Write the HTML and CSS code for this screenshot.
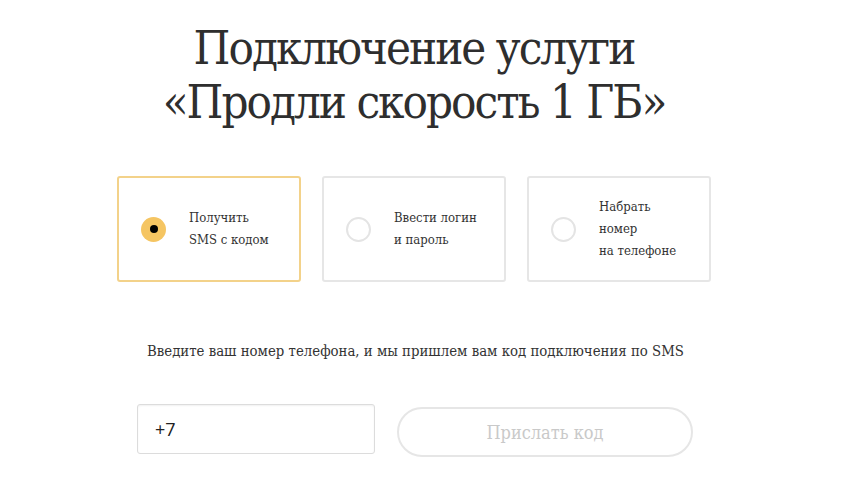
FILE: index.html
```html
<!DOCTYPE html>
<html lang="ru">
<head>
<meta charset="utf-8">
<link rel="stylesheet" href="styles.css">
</head>
<body>
<main class="page">
  <h1 class="title">Подключение услуги<br>«Продли скорость 1 ГБ»</h1>
  <div class="options">
    <label class="option option--active">
      <span class="radio radio--on"></span>
      <span class="option-text">Получить<br>SMS с кодом</span>
    </label>
    <label class="option">
      <span class="radio"></span>
      <span class="option-text">Ввести логин<br>и пароль</span>
    </label>
    <label class="option">
      <span class="radio"></span>
      <span class="option-text">Набрать<br>номер<br>на телефоне</span>
    </label>
  </div>
  <p class="hint">Введите ваш номер телефона, и мы пришлем вам код подключения по SMS</p>
  <div class="form">
    <div class="phone">+7</div>
    <button class="send">Прислать код</button>
  </div>
</main>
</body>
</html>
```
FILE: styles.css
```css
* { box-sizing: border-box; }
html, body { margin: 0; padding: 0; background: #fff; }
body {
  font-family: "DejaVu Serif", "Liberation Serif", serif;
  font-stretch: condensed;
  color: #333;
}
.page {
  width: 594px;
  margin-left: 117px;
  padding-top: 21px;
}
.title {
  margin: 0;
  text-align: center;
  font-weight: normal;
  font-size: 47px;
  line-height: 54px;
  color: #2e2e2e;
  letter-spacing: -2px;
}
.options {
  display: flex;
  gap: 21px;
  margin-top: 47px;
}
.option {
  width: 184px;
  height: 106px;
  border: 2px solid #e6e6e6;
  border-radius: 3px;
  display: flex;
  align-items: center;
  padding-left: 22px;
  gap: 23px;
}
.option--active { border-color: #f3d28a; }
.radio {
  flex: none;
  width: 25px;
  height: 25px;
  border-radius: 50%;
  border: 2px solid #e4e4e4;
  background: #fff;
  display: flex;
  align-items: center;
  justify-content: center;
}
.radio--on {
  border: none;
  background: #f5c562;
}
.radio--on::after {
  content: "";
  width: 8px;
  height: 8px;
  border-radius: 50%;
  background: #000;
}
.option-text {
  font-size: 13px;
  line-height: 22px;
  color: #333;
}
.hint {
  margin: 59px 0 0 30px;
  font-size: 14.8px;
  line-height: 20px;
  color: #333;
}
.form {
  display: flex;
  align-items: flex-start;
  gap: 22px;
  margin-top: 43px;
  padding-left: 20px;
}
.phone {
  width: 238px;
  height: 50px;
  border: 1px solid #dcdcdc;
  border-radius: 3px;
  box-shadow: inset 0 1px 2px rgba(0,0,0,0.06);
  padding-left: 17px;
  display: flex;
  align-items: center;
  font-family: "Open Sans", "Liberation Sans", sans-serif;
  font-stretch: normal;
  font-size: 18px;
  color: #222;
}
.send {
  flex: none;
  width: 296px;
  height: 50px;
  margin-top: 3px;
  border: 2px solid #e6e6e6;
  border-radius: 25px;
  background: #fff;
  font-family: "DejaVu Serif", "Liberation Serif", serif;
  font-stretch: condensed;
  font-size: 18px;
  color: #c9c9c9;
  padding: 0;
}
```
